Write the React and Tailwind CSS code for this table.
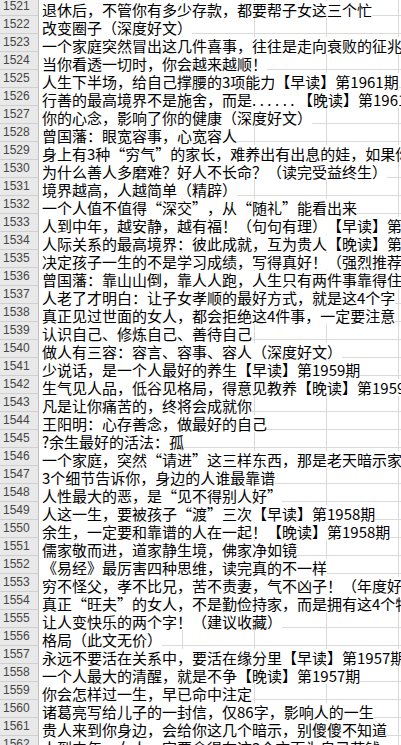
import React from "react";

const rows = [
  [1521, "退休后，不管你有多少存款，都要帮子女这三个忙"],
  [1522, "改变圈子（深度好文）"],
  [1523, "一个家庭突然冒出这几件喜事，往往是走向衰败的征兆"],
  [1524, "当你看透一切时，你会越来越顺！"],
  [1525, "人生下半场，给自己撑腰的3项能力【早读】第1961期"],
  [1526, null],
  [1527, "你的心念，影响了你的健康（深度好文）"],
  [1528, "曾国藩：眼宽容事，心宽容人"],
  [1529, "身上有3种“穷气”的家长，难养出有出息的娃，如果你有，一定要改"],
  [1530, "为什么善人多磨难？好人不长命？（读完受益终生）"],
  [1531, "境界越高，人越简单（精辟）"],
  [1532, "一个人值不值得“深交”，从“随礼”能看出来"],
  [1533, "人到中年，越安静，越有福！（句句有理）【早读】第1960期"],
  [1534, "人际关系的最高境界：彼此成就，互为贵人【晚读】第1960期"],
  [1535, "决定孩子一生的不是学习成绩，写得真好！（强烈推荐）"],
  [1536, "曾国藩：靠山山倒，靠人人跑，人生只有两件事靠得住"],
  [1537, "人老了才明白：让子女孝顺的最好方式，就是这4个字"],
  [1538, "真正见过世面的女人，都会拒绝这4件事，一定要注意"],
  [1539, "认识自己、修炼自己、善待自己"],
  [1540, "做人有三容：容言、容事、容人（深度好文）"],
  [1541, "少说话，是一个人最好的养生【早读】第1959期"],
  [1542, "生气见人品，低谷见格局，得意见教养【晚读】第1959期"],
  [1543, "凡是让你痛苦的，终将会成就你"],
  [1544, "王阳明：心存善念，做最好的自己"],
  [1545, "?余生最好的活法：孤"],
  [1546, "一个家庭，突然“请进”这三样东西，那是老天暗示家运要旺了"],
  [1547, "3个细节告诉你，身边的人谁最靠谱"],
  [1548, "人性最大的恶，是“见不得别人好”"],
  [1549, "人这一生，要被孩子“渡”三次【早读】第1958期"],
  [1550, "余生，一定要和靠谱的人在一起！【晚读】第1958期"],
  [1551, "儒家敬而进，道家静生境，佛家净如镜"],
  [1552, "《易经》最厉害四种思维，读完真的不一样"],
  [1553, "穷不怪父，孝不比兄，苦不责妻，气不凶子！（年度好文）"],
  [1554, "真正“旺夫”的女人，不是勤俭持家，而是拥有这4个特质"],
  [1555, "让人变快乐的两个字！（建议收藏）"],
  [1556, "格局（此文无价）"],
  [1557, "永远不要活在关系中，要活在缘分里【早读】第1957期"],
  [1558, "一个人最大的清醒，就是不争【晚读】第1957期"],
  [1559, "你会怎样过一生，早已命中注定"],
  [1560, "诸葛亮写给儿子的一封信，仅86字，影响人的一生"],
  [1561, "贵人来到你身边，会给你这几个暗示，别傻傻不知道"],
  [1562, "人到中年，女人一定要舍得在这3个方面为自己花钱"],
];

function Row({ n, text }) {
  return (
    <div className="flex h-[18px]">
      <div className="w-[39px] shrink-0 h-[18px] border-r border-b border-r-[#bdbdbd] border-b-[#d0d0d0] bg-[#e9e9e9] pl-[3px] text-[12px] leading-[17px] text-[#454545] font-['Liberation_Sans',Arial,sans-serif]">
        {n}
      </div>
      <div className="w-[144px] shrink-0 h-[18px] border-r border-b border-[#dadada]">
        <span className="relative z-[1] inline-block h-[17px] bg-white whitespace-nowrap pl-[3px] text-[15px] leading-[17px] text-black font-['Noto_Sans_CJK_SC',sans-serif] [text-spacing-trim:space-all]">
          {text === null ? (
            <>
              行善的最高境界不是施舍，而是
              <span className="tracking-[3.5px]">......</span>
              【晚读】第1961期
            </>
          ) : (
            text
          )}
        </span>
      </div>
      <div className="w-[72px] shrink-0 h-[18px] border-r border-b border-[#dadada]" />
      <div className="w-[72px] shrink-0 h-[18px] border-r border-b border-[#dadada]" />
      <div className="w-[72px] shrink-0 h-[18px] border-r border-b border-[#dadada]" />
      <div className="w-[72px] shrink-0 h-[18px] border-b border-[#dadada]" />
    </div>
  );
}

export default function App() {
  return (
    <div className="w-[401px] h-[745px] overflow-hidden bg-white">
      <div className="-mt-[2px]">
        {rows.map(([n, t]) => (
          <Row key={n} n={n} text={t} />
        ))}
      </div>
    </div>
  );
}
